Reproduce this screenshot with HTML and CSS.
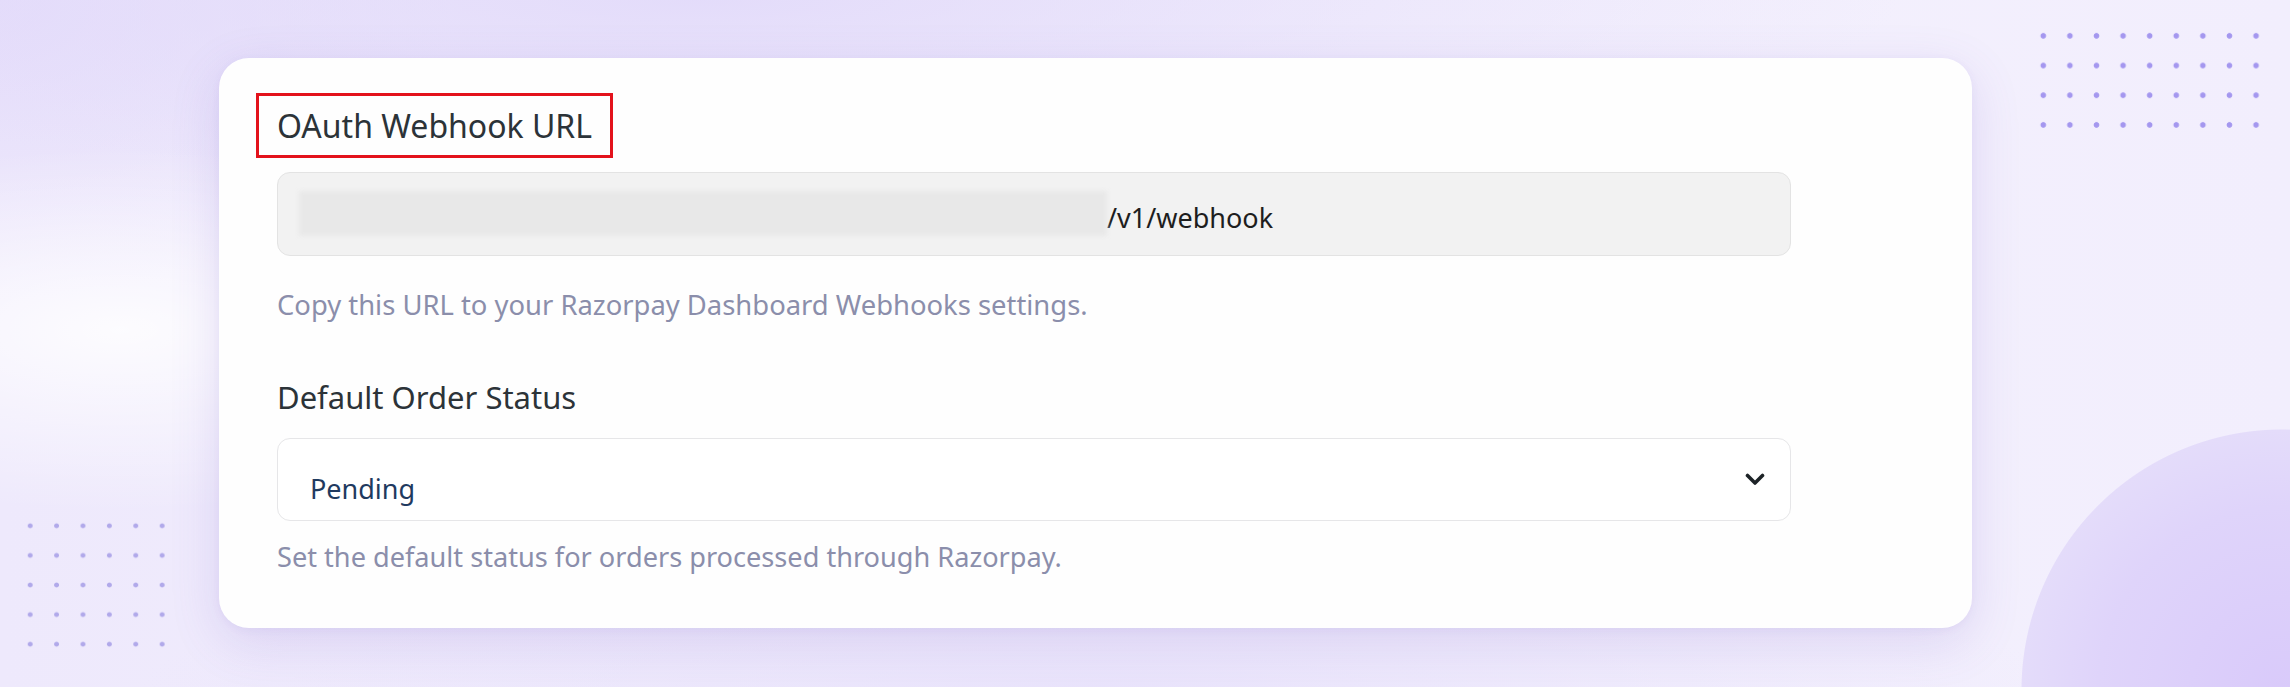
FILE: index.html
```html
<!DOCTYPE html>
<html lang="en">
<head>
    <meta charset="UTF-8">
    <meta name="viewport" content="width=device-width, initial-scale=1.0">
    <title>Razorpay Settings</title>
    <link rel="stylesheet" href="styles.css">
</head>
<body>
    <div class="dots dots-top"></div>
    <div class="dots dots-bottom"></div>

    <div class="page">
        <div class="card">
            <div class="field-label"><span class="highlight">OAuth Webhook URL</span></div>
            <div class="url-box">
                <span class="masked"></span><span class="url-path">/v1/webhook</span>
            </div>
            <p class="help help-url">Copy this URL to your Razorpay Dashboard Webhooks settings.</p>

            <div class="field-label label-status">Default Order Status</div>
            <div class="select-box">
                <span class="select-value">Pending</span>
                <svg class="chevron" width="20" height="13" viewBox="0 0 20 13">
                    <path d="M2.5 2.5 L10 10 L17.5 2.5" fill="none" stroke="#1d2327" stroke-width="3.6" stroke-linecap="round" stroke-linejoin="round"/>
                </svg>
            </div>
            <p class="help help-status">Set the default status for orders processed through Razorpay.</p>
        </div>
    </div>
</body>
</html>
```

FILE: styles.css
```css
* {
    margin: 0;
    padding: 0;
    box-sizing: border-box;
}
html,
body {
    width: 2290px;
    height: 687px;
    overflow: hidden;
}
body {
    position: relative;
    font-family: "Noto Sans", "Open Sans", sans-serif;
    background-color: #f3f0fd;
    background-image:
        /* big circle in the bottom right corner */
        radial-gradient(circle 262px at 2282px 690px, #d9cafa 0%, #dfd4fa 70%, #e4dcfa 260px, rgba(228, 220, 250, 0) 261px),
        radial-gradient(ellipse 700px 260px at 120px 330px, rgba(255, 255, 255, 0.85), rgba(255, 255, 255, 0) 70%),
        radial-gradient(ellipse 1500px 220px at 700px 0px, rgba(226, 218, 250, 0.9), rgba(226, 218, 250, 0) 80%),
        radial-gradient(ellipse 600px 400px at 0px 0px, rgba(228, 220, 250, 0.9), rgba(228, 220, 250, 0) 75%),
        radial-gradient(ellipse 1200px 160px at 1100px 687px, rgba(232, 226, 251, 0.9), rgba(232, 226, 251, 0) 80%),
        linear-gradient(90deg, #eee9fc 0%, #f4f1fd 60%, #f2eefd 100%);
}

/* dotted decoration */
.dots {
    position: absolute;
    background-image: radial-gradient(circle, #a497ef 2.4px, rgba(164, 151, 239, 0) 3.2px);
    background-size: 26.6px 29.7px;
}
.dots-top {
    left: 2030px;
    top: 21px;
    width: 240px;
    height: 119px;
}
.dots-bottom {
    left: 17px;
    top: 511px;
    width: 160px;
    height: 149px;
    background-image: radial-gradient(circle, #b1a9ea 2px, rgba(177, 169, 234, 0) 2.8px);
    background-size: 26.4px 29.6px;
}

.page {
    position: relative;
    padding: 58px 0 0 219px;
}
.card {
    width: 1753px;
    height: 570px;
    background-color: #fefefe;
    border-radius: 30px;
    box-shadow: 0 14px 50px rgba(110, 80, 190, 0.16), 0 2px 8px rgba(110, 80, 190, 0.06);
    padding: 48px 181px 0 58px;
}
.field-label {
    font-size: 32px;
    line-height: 40px;
    color: #2c3338;
}
.highlight {
    position: relative;
    display: inline-block;
}
.highlight::after {
    content: "";
    position: absolute;
    top: -13px;
    bottom: -12px;
    left: -21px;
    right: -21px;
    border: 3px solid #e3121c;
}
.url-box {
    margin-top: 26px;
    height: 84px;
    background-color: #f2f2f2;
    border: 1.5px solid #e3e3e3;
    border-radius: 13px;
    padding: 0 0 0 21px;
    display: flex;
    align-items: center;
}
.masked {
    width: 808px;
    height: 45px;
    margin-top: -2px;
    background-color: #e8e8e8;
    filter: blur(2px);
}
.url-path {
    font-size: 27px;
    color: #1e1e1e;
    margin-top: 6px;
}
.help {
    font-size: 27.4px;
    line-height: 36px;
    color: #8b8eab;
}
.help-url {
    margin-top: 31px;
}
.label-status {
    margin-top: 54px;
    font-size: 31px;
}
.select-box {
    margin-top: 21px;
    height: 83px;
    background-color: #fff;
    border: 1.5px solid #e6e6e8;
    border-radius: 13px;
    padding: 0 25px 0 32px;
    display: flex;
    align-items: center;
    justify-content: space-between;
}
.select-value {
    font-size: 27px;
    color: #1f3a5f;
    margin-top: 17px;
}
.chevron {
    display: block;
}
.help-status {
    margin-top: 18px;
    font-size: 27.15px;
}
```
